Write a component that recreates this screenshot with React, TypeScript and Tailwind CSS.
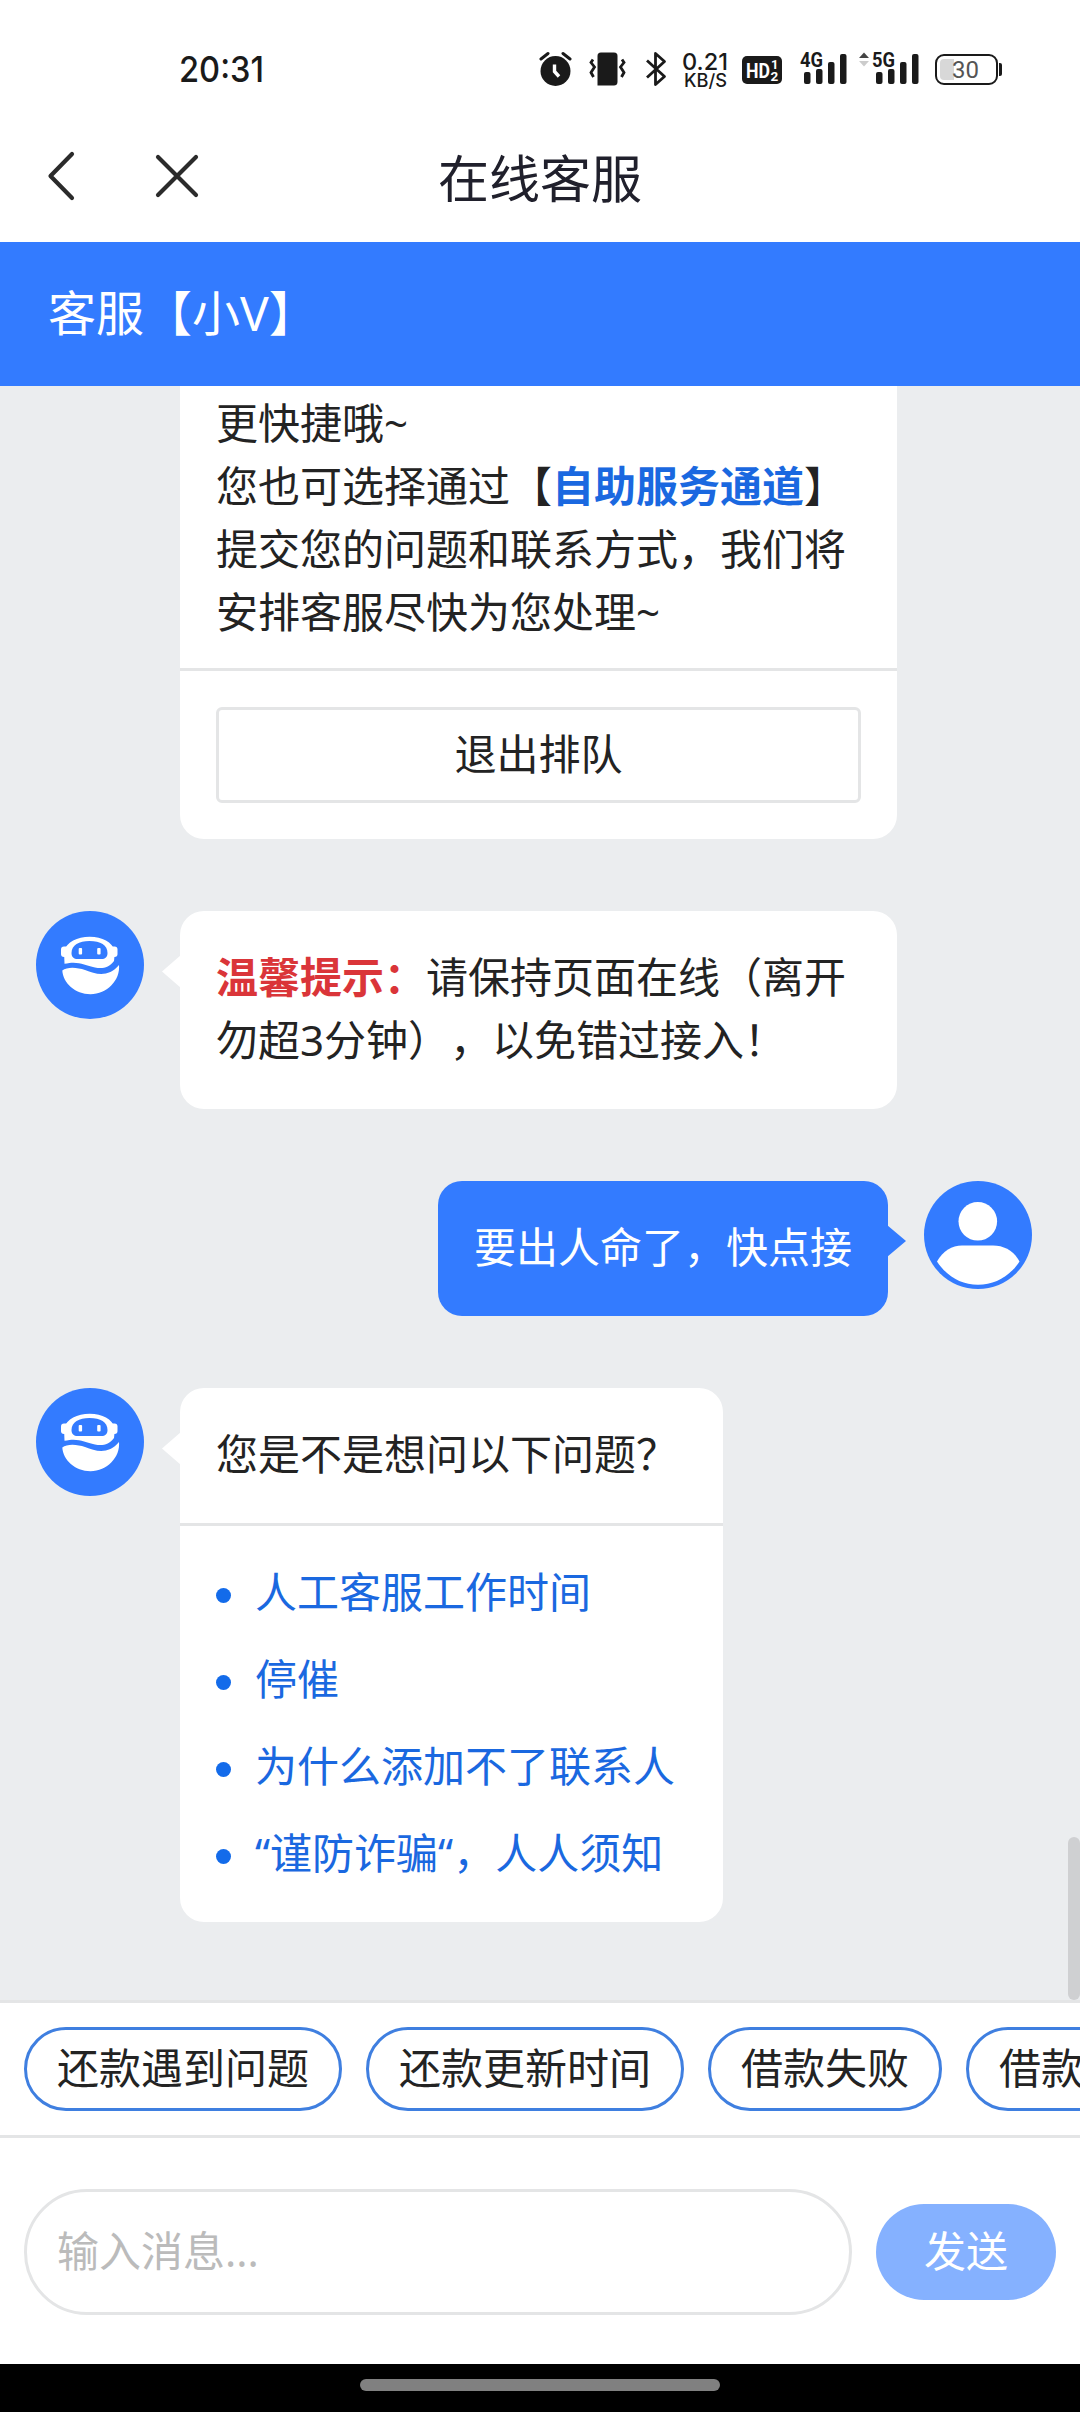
import { ReactNode, useState } from "react";

const questions = [
  "人工客服工作时间",
  "停催",
  "为什么添加不了联系人",
  "“谨防诈骗“，人人须知",
];

const shortcuts = ["还款遇到问题", "还款更新时间", "借款失败", "借款记录"];

const Signal = ({ label }: { label: string }) => (
  <svg className="overflow-visible font-[Roboto]" width="47" height="38" viewBox="0 0 47 38" fill="#1a1a1a">
    <text x="0" y="17" fontSize="20" fontWeight="700" textLength="23" lengthAdjust="spacingAndGlyphs">
      {label}
    </text>
    <rect x="4" y="22" width="6.5" height="12" rx="2" />
    <rect x="16" y="19" width="6.5" height="15" rx="2" />
    <rect x="28" y="12" width="6.5" height="22" rx="2" />
    <rect x="40" y="4" width="6.5" height="30" rx="2" />
  </svg>
);

const StatusBar = () => (
  <div className="flex h-[110px] items-start pt-[50px] text-[#1a1a1a]">
    <svg className="ml-[179px] overflow-visible font-[Inter]" width="360" height="40" viewBox="0 0 360 40" fill="#1a1a1a">
      <text x="0" y="32" fontSize="36" fontWeight="500" textLength="85" lengthAdjust="spacingAndGlyphs">
        20:31
      </text>
    </svg>
    <svg width="33" height="38" viewBox="0 0 33 38">
      <circle cx="16.5" cy="21" r="15" fill="#1a1a1a" />
      <path d="M2 9 L9 3.5 M24 3.5 L31 9" stroke="#1a1a1a" strokeWidth="3" strokeLinecap="round" />
      <path d="M15.5 14.5 V21.5 L20 26.5" fill="none" stroke="#fff" strokeWidth="3.4" />
    </svg>
    <svg className="ml-[17px]" width="37" height="38" viewBox="0 0 37 38">
      <path
        d="M12 2.5 H25 C27.5 2.5 28.5 4 28.5 6 V32 C28.5 34.5 27 35.5 25 35.5 H8.5 V6 C8.5 4 9.5 2.5 12 2.5 Z"
        fill="#1a1a1a"
      />
      <path
        d="M4 9.5 L2 12.5 L5.5 17 L2 22.5 L4.5 27 M33 9.5 L35 12.5 L31.5 17 L35 22.5 L32.5 27"
        fill="none"
        stroke="#1a1a1a"
        strokeWidth="2.8"
      />
    </svg>
    <svg className="ml-[20px]" width="21" height="38" viewBox="0 0 21 38">
      <path
        d="M1 10.5 L18.5 26.5 L9.5 34.5 V3.5 L18.5 11.5 L1 27.5"
        fill="none"
        stroke="#1a1a1a"
        strokeWidth="2.8"
        strokeLinejoin="round"
      />
    </svg>
    <svg className="ml-[15px] overflow-visible font-[Inter]" width="46" height="40" viewBox="0 0 46 40" fill="#1a1a1a">
      <text x="0" y="20" fontSize="23.5" fontWeight="500" textLength="46" lengthAdjust="spacingAndGlyphs">
        0.21
      </text>
      <text x="2" y="37" fontSize="18" fontWeight="500" textLength="43" lengthAdjust="spacingAndGlyphs">
        KB/S
      </text>
    </svg>
    <svg className="mt-[6px] ml-[14px] overflow-visible font-[Roboto]" width="40" height="28" viewBox="0 0 40 28">
      <rect width="40" height="28" rx="5" fill="#1a1a1a" />
      <g fill="#fff" fontWeight="700">
        <text x="4" y="21.5" fontSize="21" textLength="24" lengthAdjust="spacingAndGlyphs">
          HD
        </text>
        <text x="29" y="13" fontSize="13">
          1
        </text>
        <text x="28.5" y="25" fontSize="13.5">
          2
        </text>
      </g>
    </svg>
    <div className="ml-[18px]">
      <Signal label="4G" />
    </div>
    <svg className="ml-[12px]" width="10" height="20" viewBox="0 0 10 20">
      <path d="M0 8 L5 2.5 L10 8 Z" fill="#444" />
      <path d="M0 11 L5 16.5 L10 11 Z" fill="#ccc" />
    </svg>
    <div className="ml-[3px]">
      <Signal label="5G" />
    </div>
    <div className="mt-[4px] ml-[16px] flex h-[31px] w-[63px] items-center rounded-[9px] border-2 border-[#1a1a1a] p-[3px]">
      <div className="h-full w-[14px] shrink-0 rounded-l-[4px] bg-[#d8d8d8]" />
      <span className="-ml-[2px] font-[Roboto] text-[24px] leading-[24px] text-[#555]">30</span>
    </div>
    <div className="mt-[13px] ml-[1px] h-[13px] w-[3px] rounded-r-[2px] bg-[#1a1a1a]" />
  </div>
);

const NavBar = () => (
  <div className="relative flex h-[132px] items-center">
    <svg className="ml-[47px]" width="28" height="50" viewBox="0 0 28 50">
      <path d="M25 3 L3.5 25 L25 47" fill="none" stroke="#2b2b2b" strokeWidth="4.2" strokeLinecap="round" strokeLinejoin="round" />
    </svg>
    <svg className="ml-[80px]" width="44" height="44" viewBox="0 0 44 44">
      <path d="M3 3 L41 41 M41 3 L3 41" stroke="#2b2b2b" strokeWidth="4.2" strokeLinecap="round" />
    </svg>
    <h1 className="absolute inset-x-0 top-[32px] text-center text-[51px] leading-[72px] text-[#20202c]">在线客服</h1>
  </div>
);

const BotAvatar = () => (
  <svg className="shrink-0" width="108" height="108" viewBox="0 0 108 108">
    <circle cx="54" cy="54" r="54" fill="#337bff" />
    <rect x="25" y="35.5" width="8" height="10.5" rx="3" fill="#fff" />
    <rect x="74" y="35.5" width="7.5" height="10.5" rx="3" fill="#fff" />
    <path
      d="M28 40 C31 31 41 25.7 53.7 25.7 C66.5 25.7 76 31 79 40 L78 50 C73 57 66 58 59 56.5 C48 54 42 49.5 28.5 52.8 Z"
      fill="#fff"
    />
    <path
      d="M35.5 42 C35.5 34 43 30 53.5 30 C64.5 30 71.5 34 71.5 42 C71.5 46 69 48 65.5 48 H41.5 C38 48 35.5 46 35.5 42 Z"
      fill="#337bff"
    />
    <rect x="42.7" y="37" width="3.4" height="6.5" rx="1" fill="#fff" />
    <rect x="61.2" y="37" width="3.4" height="6.5" rx="1" fill="#fff" />
    <path
      d="M26.3 59.5 C31 55.5 41 56 49 59 C61 64 73 66 83 54 C84.5 69 71 83.2 54.5 83.2 C39 83.2 27 72 26.3 59.5 Z"
      fill="#fff"
    />
  </svg>
);

const UserAvatar = () => (
  <svg className="shrink-0" width="108" height="108" viewBox="0 0 108 108">
    <circle cx="54" cy="54" r="54" fill="#337bff" />
    <circle cx="53.8" cy="40.3" r="19.3" fill="#fff" />
    <path
      d="M13 80.5 C19 70 28 64.6 38 64.6 H69 C80 64.6 90 70 95.5 80.5 C86 95 71 103.8 54 103.8 C37 103.8 22.5 95 13 80.5 Z"
      fill="#fff"
    />
  </svg>
);

const BotMessage = ({ width, children }: { width: string; children: ReactNode }) => (
  <div className="flex items-start pl-9">
    <BotAvatar />
    <div className={`relative ml-9 rounded-[24px] bg-white ${width}`}>
      <svg className="absolute top-[44px] -left-[18px]" width="19" height="33" viewBox="0 0 19 33">
        <path d="M19 0 L0 16.5 L19 33 Z" fill="#fff" />
      </svg>
      {children}
    </div>
  </div>
);

const App = () => {
  const [message, setMessage] = useState<string>("");

  return (
    <div className="flex h-[2412px] w-[1080px] flex-col overflow-hidden bg-white font-['Noto_Sans','Noto_Sans_CJK_SC',sans-serif] text-[42px] leading-[63px] text-[#232323] [text-spacing-trim:space-all]">
      <StatusBar />
      <NavBar />
      <div className="flex h-[144px] shrink-0 items-center bg-[#337bff] pb-[2px] pl-12 text-[48px] leading-[72px] text-white">
        客服【小V】
      </div>

      <main className="relative flex h-[1614px] shrink-0 flex-col gap-[72px] bg-[#ebedef]">
        <div className="ml-[180px] w-[717px] rounded-b-[24px] bg-white">
          <div className="px-9 pt-[5px] pb-[25px]">
            <p>更快捷哦~</p>
            <p>
              您也可选择通过【<b className="text-[#1a68e0]">自助服务通道</b>】
            </p>
            <p>提交您的问题和联系方式，我们将</p>
            <p>安排客服尽快为您处理~</p>
          </div>
          <div className="border-t-3 border-[#e4e5e6] p-9">
            <button type="button" className="h-[96px] w-full rounded-[6px] border-3 border-[#e4e5e6] pb-[3px]">
              退出排队
            </button>
          </div>
        </div>

        <BotMessage width="w-[717px]">
          <div className="px-9 pt-[34px] pb-[38px]">
            <p>
              <b className="text-[#da3539]">温馨提示：</b>请保持页面在线（离开
            </p>
            <p>勿超3分钟），以免错过接入！</p>
          </div>
        </BotMessage>

        <div className="flex items-start justify-end pr-12">
          <div className="relative mr-9 rounded-[24px] bg-[#337bff] px-9 pt-[34px] pb-[38px] text-white">
            要出人命了，快点接
            <svg className="absolute top-[44px] -right-[18px]" width="19" height="32" viewBox="0 0 19 32">
              <path d="M0 0 L19 16 L0 32 Z" fill="#337bff" />
            </svg>
          </div>
          <UserAvatar />
        </div>

        <BotMessage width="w-[543px]">
          <p className="px-9 pt-[34px] pb-[38px]">您是不是想问以下问题？</p>
          <ul className="flex flex-col gap-6 border-t-3 border-[#e4e5e6] px-9 pt-[34px] pb-[38px] text-[#1a68e0]">
            {questions.map((question) => (
              <li key={question} className="flex items-center gap-6 whitespace-nowrap">
                <span className="mt-[8px] size-[15px] rounded-full bg-[#136bea]" />
                {question}
              </li>
            ))}
          </ul>
        </BotMessage>

        <div className="absolute right-0 bottom-0 h-[163px] w-[12px] rounded-full bg-[#cfd0d2]" />
      </main>

      <div className="flex h-[138px] shrink-0 items-start gap-6 border-y-3 border-[#e4e5e6] pt-6 pl-6">
        {shortcuts.map((shortcut) => (
          <button
            key={shortcut}
            type="button"
            className="flex h-[84px] shrink-0 items-center rounded-full border-3 border-[#3f7fe0] px-[30px] pb-[3px] whitespace-nowrap"
          >
            {shortcut}
          </button>
        ))}
      </div>

      <form className="flex h-[226px] shrink-0 items-center gap-6 px-6 pt-[24px] pb-[22px]">
        <input
          type="text"
          value={message}
          onChange={(e) => setMessage(e.target.value)}
          placeholder="输入消息..."
          className="h-[126px] w-[828px] rounded-full border-3 border-[#e4e5e6] px-[30px] pb-[4px] placeholder:text-[#bbbbbb]"
        />
        <button type="button" className="h-[96px] w-[180px] rounded-full bg-[#85b1ff] pb-[4px] text-white">
          发送
        </button>
      </form>

      <div className="flex h-[48px] shrink-0 justify-center bg-black pt-[15px]">
        <div className="h-[12px] w-[360px] rounded-full bg-[#808080]" />
      </div>
    </div>
  );
};

export default App;
